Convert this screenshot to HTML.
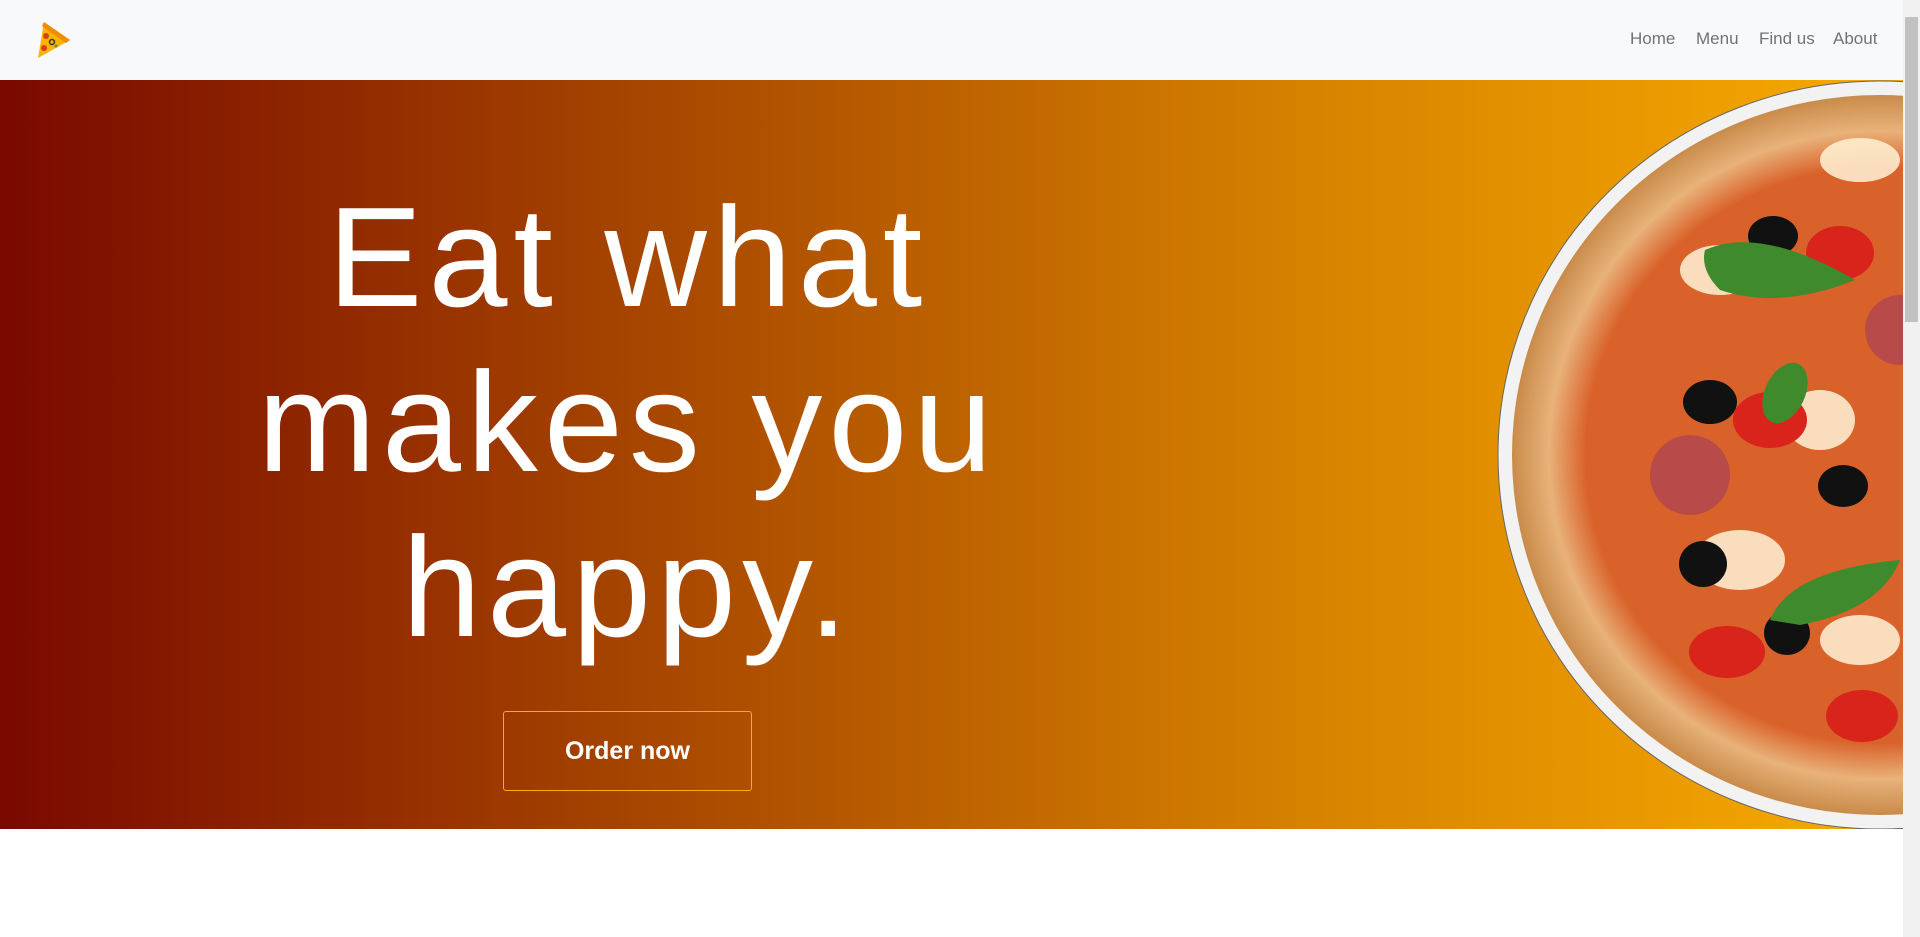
<!DOCTYPE html>
<html><head><style>
*{margin:0;padding:0;box-sizing:border-box}
body{width:1920px;height:937px;overflow:hidden;background:#fff;font-family:"Liberation Sans",sans-serif;position:relative}
.nav{position:absolute;left:0;top:0;width:1903px;height:80px;background:#f8f9fa}
.nav a{position:absolute;top:29px;font-size:17px;color:rgba(0,0,0,.55);text-decoration:none}
.hero{position:absolute;left:0;top:80px;width:1903px;height:749px;background:linear-gradient(90deg,#790900 0%,#a84800 35%,#d98400 70%,#f7ab00 100%);overflow:hidden}
h1{position:absolute;left:0;width:1256px;top:95px;text-align:center;color:#fff;font-weight:400;font-size:142px;line-height:165px;letter-spacing:6px}
.btn{position:absolute;left:503px;top:631px;width:249px;height:80px;border:1px solid #f5b000;border-radius:3px;color:#fff;font-weight:bold;font-size:25px;text-align:center;line-height:78px}
.sb{position:absolute;right:0;top:0;width:17px;height:937px;background:#f1f1f1}
.sb div{position:absolute;left:2px;top:17px;width:13px;height:305px;background:#c1c1c1}
</style></head><body>
<div class="nav">
<svg style="position:absolute;left:32px;top:20px" width="40" height="40" viewBox="0 0 40 40">
<path d="M12 2 L38 20 L6 38 Z" fill="#f7b500"/><path d="M12 2 L38 20 L34 23 L10 6 Z" fill="#f08c00"/>
<circle cx="14" cy="16" r="3" fill="#e03a1e"/><circle cx="12" cy="28" r="3" fill="#e03a1e"/><circle cx="20" cy="22" r="2.5" fill="none" stroke="#333" stroke-width="1.5"/><circle cx="24" cy="26" r="1.5" fill="#6a8a2a"/></svg>
<a style="left:1630px">Home</a><a style="left:1696px">Menu</a><a style="left:1759px">Find us</a><a style="left:1833px">About</a>
</div>
<div class="hero">
<h1>Eat what<br>makes you<br>happy.</h1>
<div class="btn">Order now</div>
<svg style="position:absolute;left:1495px;top:0" width="420" height="749" viewBox="1495 80 420 749">
<defs><radialGradient id="g" cx="0.5" cy="0.5" r="0.5"><stop offset="0.8" stop-color="#d9622a"/><stop offset="0.9" stop-color="#e8b27a"/><stop offset="1" stop-color="#c98b4a"/></radialGradient></defs>
<ellipse cx="1880" cy="455" rx="382" ry="374" fill="#f2f2f2" stroke="#666" stroke-width="1"/>
<ellipse cx="1880" cy="455" rx="368" ry="360" fill="url(#g)"/>
<g fill="#fff3d6" opacity=".85"><ellipse cx="1720" cy="270" rx="40" ry="25"/><ellipse cx="1820" cy="420" rx="35" ry="30"/><ellipse cx="1740" cy="560" rx="45" ry="30"/><ellipse cx="1860" cy="640" rx="40" ry="25"/><ellipse cx="1860" cy="160" rx="40" ry="22"/></g>
<g fill="#b84a4a"><circle cx="1690" cy="475" r="40"/><circle cx="1900" cy="330" r="35"/></g>
<g fill="#111"><ellipse cx="1773" cy="236" rx="25" ry="20"/><ellipse cx="1710" cy="402" rx="27" ry="22"/><ellipse cx="1843" cy="486" rx="25" ry="21"/><ellipse cx="1703" cy="564" rx="24" ry="23"/><ellipse cx="1787" cy="633" rx="23" ry="22"/></g>
<g fill="#d8241a"><ellipse cx="1840" cy="253" rx="34" ry="27"/><ellipse cx="1770" cy="420" rx="37" ry="28"/><ellipse cx="1727" cy="652" rx="38" ry="26"/><ellipse cx="1862" cy="716" rx="36" ry="26"/></g>
<g fill="#3f8a2c"><path d="M1705 250 Q1760 225 1855 280 Q1780 310 1720 290 Q1700 270 1705 250Z"/><path d="M1770 620 Q1790 570 1900 560 Q1880 610 1800 625Z"/><ellipse cx="1785" cy="393" rx="20" ry="32" transform="rotate(25 1785 393)"/></g>
</svg>
</div>
<div class="sb"><div></div></div>
</body></html>
